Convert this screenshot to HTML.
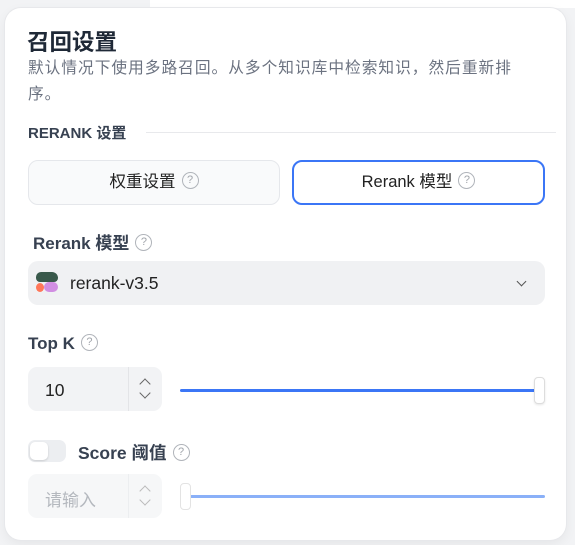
<!DOCTYPE html>
<html><head><meta charset="utf-8"><style>
*{box-sizing:border-box;margin:0;padding:0}
body{width:575px;height:545px;background:#f2f3f5;font-family:"Liberation Sans","Noto Sans CJK SC",sans-serif;position:relative;overflow:hidden;color:#1f2937}
.bgtop{position:absolute;left:150px;top:0;width:425px;height:8px;background:#fff}
.panel{position:absolute;left:5px;top:8px;width:561px;height:532px;background:#fff;border-radius:16px;box-shadow:0 0 0 1px #e7e8eb,0 4px 12px rgba(0,0,0,.06)}
.a{position:absolute;white-space:nowrap}
.q{display:inline-block;width:17px;height:17px;border:1.5px solid #b0b4ba;border-radius:50%;font-size:11px;line-height:14px;text-align:center;color:#a0a4aa;font-weight:400;vertical-align:middle;margin-left:6px;position:relative;top:-2px}
.btn{position:absolute;height:45px;border-radius:10px;text-align:center;line-height:43px;font-size:16.5px;color:#222}
.inp{position:absolute;width:134px;height:44px;background:#f2f3f5;border-radius:9px}
.inp .d{position:absolute;left:100px;top:0;width:1px;height:44px;background:#e3e4e7}
.chev{position:absolute;left:113px;width:8px;height:8px;border-left:1.5px solid #666;border-top:1.5px solid #666}
</style></head><body>
<div class="bgtop"></div>
<div class="panel"></div>
<div class="a" style="left:27px;top:25px;font-size:22.5px;font-weight:700;color:#1f2937">召回设置</div>
<div class="a" style="left:28px;top:56px;font-size:15.7px;line-height:26px;color:#6b7280;letter-spacing:1px">默认情况下使用多路召回。从多个知识库中检索知识，然后重新排<br>序。</div>
<div class="a" style="left:28px;top:122px;font-size:15px;font-weight:700;color:#374151">RERANK 设置</div>
<div class="a" style="left:146px;top:132px;width:410px;height:1px;background:#e8e9ec"></div>
<div class="btn" style="left:28px;top:160px;width:252px;background:#f9fafb;border:1px solid #e5e7eb">权重设置<span class="q">?</span></div>
<div class="btn" style="left:292px;top:160px;width:253px;background:#fff;border:2px solid #3b76f6;line-height:41px">Rerank 模型<span class="q">?</span></div>
<div class="a" style="left:33px;top:229px;font-size:17px;font-weight:700;color:#374151">Rerank 模型<span class="q">?</span></div>
<div class="a" style="left:28px;top:261px;width:517px;height:44px;background:#f0f1f3;border-radius:10px"></div>
<div class="a" style="left:36px;top:272px;width:22px;height:10px;background:#39594b;border-radius:5px 6px 4px 4px"></div>
<div class="a" style="left:36px;top:283px;width:8px;height:9px;background:#ff7759;border-radius:50%"></div>
<div class="a" style="left:44px;top:282px;width:14px;height:10px;background:#d18ee2;border-radius:5px"></div>
<div class="a" style="left:70px;top:273px;font-size:17.5px;color:#222">rerank-v3.5</div>
<div class="a" style="left:518px;top:278px;width:7px;height:7px;border-right:1.5px solid #555;border-bottom:1.5px solid #555;transform:rotate(45deg)"></div>
<div class="a" style="left:28px;top:334px;font-size:17px;font-weight:700;color:#374151">Top K<span class="q">?</span></div>
<div class="inp" style="left:28px;top:367px"><div class="d"></div>
<div class="a" style="left:17px;top:13px;font-size:17.5px;color:#222">10</div>
<div class="chev" style="top:13px;transform:rotate(45deg)"></div>
<div class="chev" style="top:22px;transform:rotate(225deg)"></div></div>
<div class="a" style="left:180px;top:389px;width:356px;height:3px;background:#3b76f6;border-radius:2px"></div>
<div class="a" style="left:534px;top:377px;width:11px;height:27px;background:#fff;border:1px solid #ddd;border-radius:4px;box-shadow:0 1px 2px rgba(0,0,0,.1)"></div>
<div class="a" style="left:28px;top:440px;width:38px;height:22px;background:#eceef1;border-radius:7px"></div>
<div class="a" style="left:30px;top:442px;width:18px;height:18px;background:#fff;border-radius:5px;box-shadow:0 1px 2px rgba(0,0,0,.15)"></div>
<div class="a" style="left:78px;top:440px;font-size:17.5px;font-weight:700;color:#374151">Score 阈值<span class="q">?</span></div>
<div class="inp" style="left:28px;top:474px;background:#f6f7f8"><div class="d" style="background:#eceef0"></div>
<div class="a" style="left:17px;top:12px;font-size:17px;color:#b4b8be">请输入</div>
<div class="chev" style="top:13px;transform:rotate(45deg);border-color:#bbb"></div>
<div class="chev" style="top:22px;transform:rotate(225deg);border-color:#bbb"></div></div>
<div class="a" style="left:190px;top:495px;width:355px;height:3px;background:#8ab0f8;border-radius:2px"></div>
<div class="a" style="left:180px;top:483px;width:11px;height:27px;background:#fff;border:1px solid #e3e3e3;border-radius:4px"></div>
</body></html>
